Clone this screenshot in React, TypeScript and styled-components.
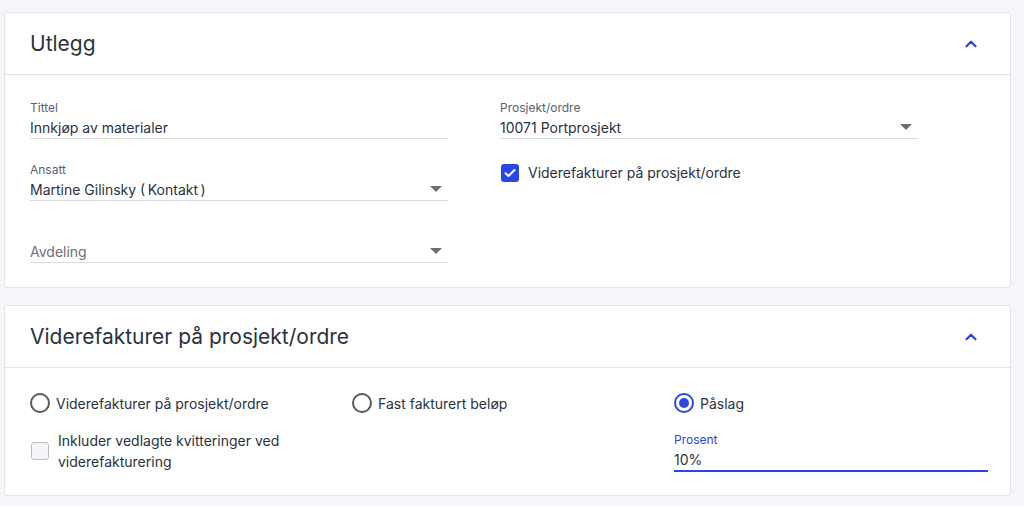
import React from 'react'
import styled, { createGlobalStyle } from 'styled-components'
import { ChevronUp } from 'lucide-react'

const GlobalStyle = createGlobalStyle`
  body {
    margin: 0;
    background-color: #f5f6f9;
    font-family: Inter, 'Noto Sans', sans-serif;
    color: #2b3240;
  }
`

const Page = styled.div`
  display: flex;
  flex-direction: column;
  gap: 17px;
  padding: 12px 13px 0 4px;
`

const Card = styled.section`
  background-color: #ffffff;
  border: 1px solid #e2e4e8;
  border-radius: 3px;
`

const CardHeader = styled.div`
  height: 61px;
  display: flex;
  align-items: center;
  justify-content: space-between;
  padding: 0 30px 0 25px;
  border-bottom: 1px solid #e2e4e8;
`

const CardTitle = styled.h2`
  margin: 0;
  font-size: 21px;
  font-weight: 400;
  color: #2b3240;
`

const Toggle = styled.span`
  display: flex;
  color: #2a45e8;
`

const FormGrid = styled.div`
  display: grid;
  grid-template-columns: 470px 470px;
  padding: 25px 25px 24px;
`

const Column = styled.div`
  display: flex;
  flex-direction: column;
  gap: 23px;
`

const Field = styled.div<{ $focused?: boolean; $width?: string }>`
  width: ${(p) => p.$width || '418px'};
  display: flex;
  flex-direction: column;
  border-bottom: ${(p) => (p.$focused ? '2px solid #2a45e8' : '1px solid #d9dbe0')};
`

const InlineField = styled(Field)`
  align-self: end;
`

const Label = styled.label<{ $focused?: boolean }>`
  height: 16px;
  font-size: 12px;
  line-height: 16px;
  color: ${(p) => (p.$focused ? '#2a45e8' : '#5c6170')};
`

const ValueRow = styled.div`
  display: flex;
  align-items: center;
  justify-content: space-between;
  height: 22px;
  padding-right: 6px;
`

const Value = styled.span<{ $placeholder?: boolean }>`
  font-size: 14px;
  color: ${(p) => (p.$placeholder ? '#6a6f7b' : '#2b3240')};
`

const Caret = styled.span`
  width: 0;
  height: 0;
  border-left: 6px solid transparent;
  border-right: 6px solid transparent;
  border-top: 6px solid #6b6e75;
`

const CheckRow = styled.label`
  display: flex;
  align-items: center;
  gap: 9px;
  font-size: 14px;
  line-height: 21px;
  color: #2b3240;
`

const Box = styled.span<{ $checked?: boolean }>`
  flex: none;
  width: 18px;
  height: 18px;
  box-sizing: border-box;
  border-radius: 3px;
  display: flex;
  align-items: center;
  justify-content: center;
  background-color: ${(p) => (p.$checked ? '#2a45e8' : '#f4f5f8')};
  border: ${(p) => (p.$checked ? 'none' : '1px solid #b9bcc4')};
  margin-left: 1px;
`

const OptionGrid = styled.div`
  display: grid;
  grid-template-columns: repeat(3, 314px);
  column-gap: 8px;
  row-gap: 17px;
  padding: 25px 25px 23px 25px;
`

const RadioRow = styled.label`
  display: flex;
  align-items: center;
  gap: 6px;
  font-size: 14px;
  color: #2b3240;
`

const Radio = styled.span<{ $checked?: boolean }>`
  flex: none;
  width: 20px;
  height: 20px;
  box-sizing: border-box;
  border-radius: 50%;
  border: 2px solid ${(p) => (p.$checked ? '#2a45e8' : '#55585e')};
  display: flex;
  align-items: center;
  justify-content: center;

  &::after {
    content: '';
    display: ${(p) => (p.$checked ? 'block' : 'none')};
    width: 10px;
    height: 10px;
    border-radius: 50%;
    background-color: #2a45e8;
  }
`

const Spacer = styled.div``

function Select({ label, value, placeholder }: { label?: string; value?: string; placeholder?: string }) {
  return (
    <Field>
      <Label>{label}</Label>
      <ValueRow>
        {value ? <Value>{value}</Value> : <Value $placeholder>{placeholder}</Value>}
        <Caret />
      </ValueRow>
    </Field>
  )
}

function Check() {
  return (
    <svg width="12" height="10" viewBox="0 0 12 10" fill="none">
      <path d="M1.5 5.2 4.5 8 10.5 2" stroke="#fff" strokeWidth="2" strokeLinecap="round" strokeLinejoin="round" />
    </svg>
  )
}

export default function App() {
  return (
    <>
      <GlobalStyle />
      <Page>
        <Card>
          <CardHeader>
            <CardTitle>Utlegg</CardTitle>
            <Toggle>
              <ChevronUp size={18} strokeWidth={3} />
            </Toggle>
          </CardHeader>
          <FormGrid>
            <Column>
              <Field>
                <Label>Tittel</Label>
                <ValueRow>
                  <Value>Innkjøp av materialer</Value>
                </ValueRow>
              </Field>
              <Select label="Ansatt" value={'Martine Gilinsky (\u2009Kontakt\u2009)'} />
              <Select placeholder="Avdeling" />
            </Column>
            <Column>
              <Select label="Prosjekt/ordre" value="10071 Portprosjekt" />
              <CheckRow>
                <Box $checked>
                  <Check />
                </Box>
                Viderefakturer på prosjekt/ordre
              </CheckRow>
            </Column>
          </FormGrid>
        </Card>

        <Card>
          <CardHeader>
            <CardTitle>Viderefakturer på prosjekt/ordre</CardTitle>
            <Toggle>
              <ChevronUp size={18} strokeWidth={3} />
            </Toggle>
          </CardHeader>
          <OptionGrid>
            <RadioRow>
              <Radio />
              Viderefakturer på prosjekt/ordre
            </RadioRow>
            <RadioRow>
              <Radio />
              Fast fakturert beløp
            </RadioRow>
            <RadioRow>
              <Radio $checked />
              Påslag
            </RadioRow>
            <CheckRow>
              <Box />
              <span>
                Inkluder vedlagte kvitteringer ved
                <br />
                viderefakturering
              </span>
            </CheckRow>
            <Spacer />
            <InlineField $focused $width="314px">
              <Label $focused>Prosent</Label>
              <ValueRow>
                <Value>10%</Value>
              </ValueRow>
            </InlineField>
          </OptionGrid>
        </Card>
      </Page>
    </>
  )
}
